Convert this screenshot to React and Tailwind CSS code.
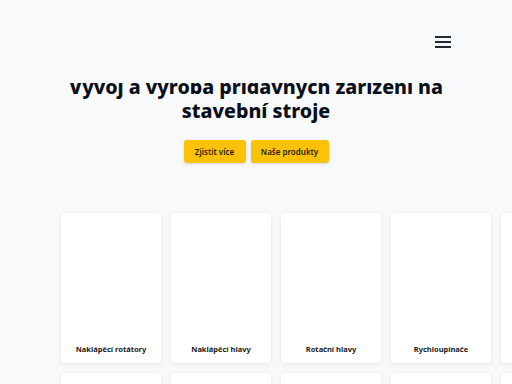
import React from "react";

const cards = [
  "Naklápěcí rotátory",
  "Naklápěcí hlavy",
  "Rotační hlavy",
  "Rychloupínače",
  "Příslušenství",
  "Lžíce",
  "Drapáky",
  "Hydraulické kladivo",
  "Adaptéry",
  "Servis",
];

export default function App() {
  return (
    <div
      className="relative w-[512px] h-[384px] overflow-hidden bg-[#f8f9fb]"
      style={{ fontFamily: '"Noto Sans", "Open Sans", sans-serif' }}
    >
      <header className="absolute top-0 left-0 right-0 h-[83px] bg-[#f8f9fb] z-10 flex justify-end items-start pt-[36px] pr-[61px]">
        <button className="flex flex-col gap-[3px] w-[16px]">
          <span className="block h-[2px] w-[16px] bg-[#1f2937]" />
          <span className="block h-[2px] w-[16px] bg-[#1f2937]" />
          <span className="block h-[2px] w-[16px] bg-[#1f2937]" />
        </button>
      </header>

      <section className="pt-[75px] flex flex-col items-center">
        <h1 className="text-[19.6px] leading-[24px] font-extrabold text-[#0b0f1a] text-center w-[400px]">
          Vývoj a výroba přídavných zařízení na stavební stroje
        </h1>
        <div className="mt-[17px] flex gap-[5px]">
          <button className="h-[23px] w-[62px] rounded-[3px] bg-[#fcc20a] text-[8px] font-semibold text-[#2a2100] shadow-[0_1px_3px_rgba(0,0,0,0.15)]">
            Zjistit více
          </button>
          <button className="h-[23px] w-[78px] rounded-[3px] bg-[#fcc20a] text-[8px] font-semibold text-[#2a2100] shadow-[0_1px_3px_rgba(0,0,0,0.15)]">
            Naše produkty
          </button>
        </div>
      </section>

      <section className="mt-[50px] pl-[61px]">
        <div className="grid grid-cols-[repeat(5,100px)] gap-[10px] w-max">
          {cards.map((c, i) => (
            <div
              key={i}
              className="h-[150px] bg-white rounded-[3px] shadow-[0_1px_5px_rgba(0,0,0,0.08)] flex items-end justify-center pb-[8px]"
            >
              <span className="text-[7.5px] font-bold text-[#1a1a1a]">{c}</span>
            </div>
          ))}
        </div>
      </section>
    </div>
  );
}
